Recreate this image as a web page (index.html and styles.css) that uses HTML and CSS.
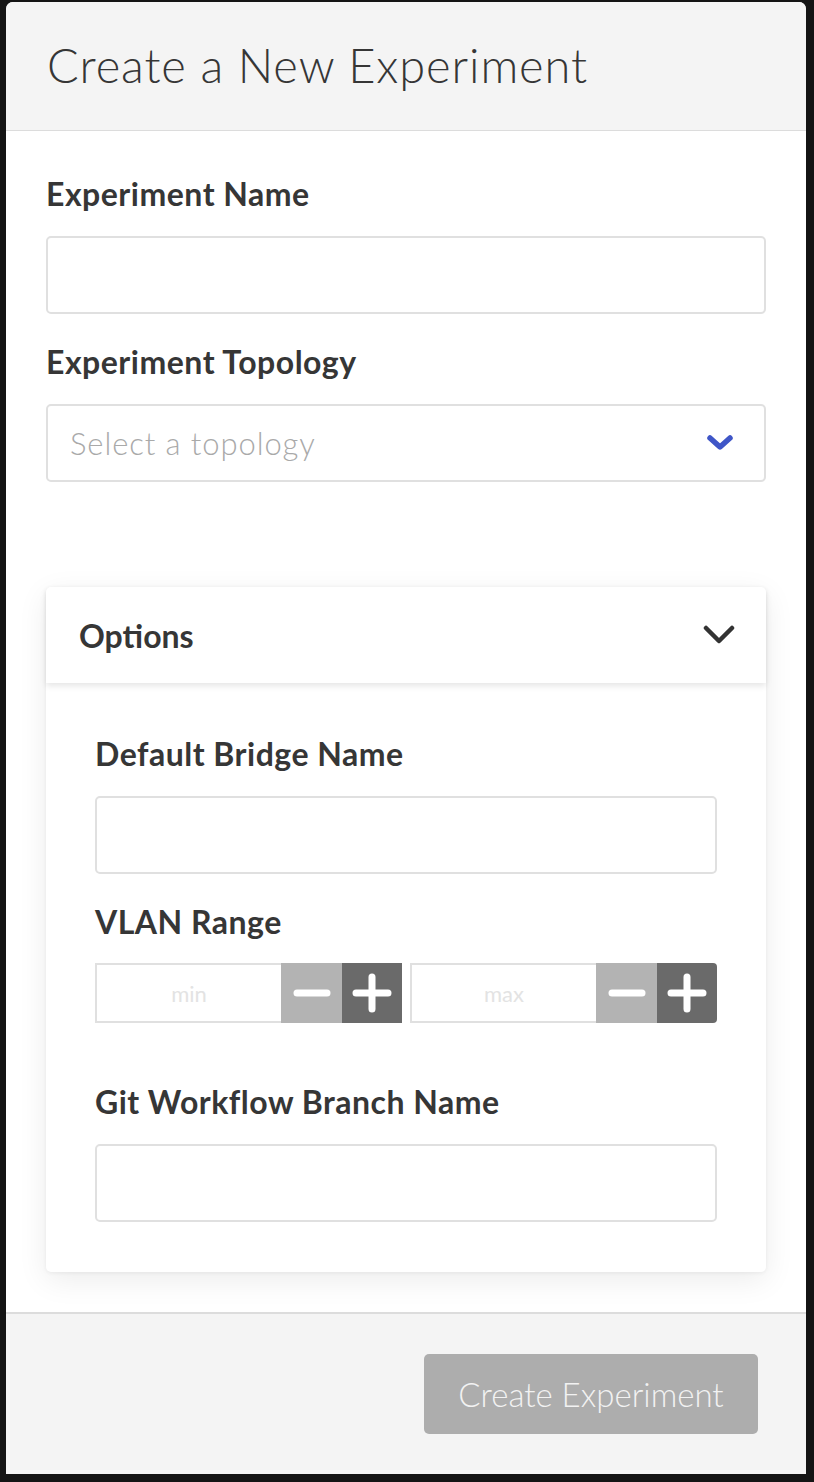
FILE: index.html
```html
<!DOCTYPE html>
<html lang="en">
<head>
<meta charset="utf-8">
<title>Create a New Experiment</title>
<link rel="stylesheet" href="styles.css">
</head>
<body>
<div class="modal">
  <div class="modal-header">
    <h1 class="modal-title">Create a New Experiment</h1>
  </div>
  <div class="modal-body">
    <div class="field">
      <label class="label">Experiment Name</label>
      <input class="input" type="text">
    </div>
    <div class="field">
      <label class="label">Experiment Topology</label>
      <div class="select">
        <span class="select-placeholder">Select a topology</span>
        <svg class="select-chevron" width="28" height="20" viewBox="0 0 28 20"><path d="M4 5 L14 14 L24 5" fill="none" stroke="#3f56c7" stroke-width="5.5" stroke-linecap="round" stroke-linejoin="round"/></svg>
      </div>
    </div>
    <div class="card">
      <div class="card-header">
        <span class="card-title">Options</span>
        <svg class="card-chevron" width="32" height="22" viewBox="0 0 32 22"><path d="M3 4 L16 17 L29 4" fill="none" stroke="#333" stroke-width="4.5" stroke-linecap="round" stroke-linejoin="round"/></svg>
      </div>
      <div class="card-content">
        <div class="field">
          <label class="label">Default Bridge Name</label>
          <input class="input" type="text">
        </div>
        <div class="field field-vlan">
          <label class="label">VLAN Range</label>
          <div class="range-row">
            <div class="num-group">
              <input class="num-input" type="text" placeholder="min">
              <button class="num-btn minus"><svg width="38" height="12" viewBox="0 0 38 12"><path d="M4 6 H34" stroke="#fff" stroke-width="7" stroke-linecap="round"/></svg></button>
              <button class="num-btn plus"><svg width="40" height="40" viewBox="0 0 40 40"><path d="M4 20 H36 M20 4 V36" stroke="#fff" stroke-width="7" stroke-linecap="round"/></svg></button>
            </div>
            <div class="num-group last">
              <input class="num-input" type="text" placeholder="max">
              <button class="num-btn minus"><svg width="38" height="12" viewBox="0 0 38 12"><path d="M4 6 H34" stroke="#fff" stroke-width="7" stroke-linecap="round"/></svg></button>
              <button class="num-btn plus"><svg width="40" height="40" viewBox="0 0 40 40"><path d="M4 20 H36 M20 4 V36" stroke="#fff" stroke-width="7" stroke-linecap="round"/></svg></button>
            </div>
          </div>
        </div>
        <div class="field field-git">
          <label class="label">Git Workflow Branch Name</label>
          <input class="input" type="text">
        </div>
      </div>
    </div>
  </div>
  <div class="modal-footer">
    <button class="btn-create" disabled>Create Experiment</button>
  </div>
</div>
</body>
</html>
```
FILE: styles.css
```css
* { box-sizing: border-box; }
html, body { margin: 0; padding: 0; }
body {
  background: #141414;
  font-family: Lato, "Open Sans", sans-serif;
  color: #333;
  height: 1482px;
  overflow: hidden;
}
.modal {
  width: 800px;
  margin: 2px 0 0 6px;
  background: #fff;
  border-radius: 7px 7px 0 0;
  overflow: hidden;
}
.modal-header {
  height: 129px;
  background: #f4f4f4;
  border-bottom: 1px solid #dcdcdc;
  display: flex;
  align-items: center;
  padding: 0 41px 0 41px;
}
.modal-title {
  margin: 0 0 2px 0;
  font-weight: 300;
  font-size: 47px;
  color: #363636;
  letter-spacing: 0.9px;
}
.modal-body {
  padding: 43px 40px 40px 40px;
}
.field {
  display: flex;
  flex-direction: column;
}
.field + .field { margin-top: 28px; }
.label {
  font-size: 32px;
  line-height: 40px;
  font-weight: 700;
  letter-spacing: 0.5px;
  color: #363636;
  margin-bottom: 22px;
}
.input {
  height: 78px;
  width: 100%;
  border: 2px solid #e0e0e0;
  border-radius: 5px;
  background: #fff;
  font-family: inherit;
  font-size: 28px;
  padding: 0 22px;
  outline: none;
}
.select {
  height: 78px;
  border: 2px solid #e0e0e0;
  border-radius: 5px;
  display: flex;
  align-items: center;
  justify-content: space-between;
  padding: 0 30px 0 22px;
}
.select-placeholder {
  font-size: 31px;
  font-weight: 300;
  letter-spacing: 0.9px;
  color: #a9a9a9;
}
.card {
  margin-top: 105px;
  border-radius: 5px;
  background: #fff;
  box-shadow: 0 8px 30px rgba(0,0,0,0.08), 0 1px 4px rgba(0,0,0,0.06);
}
.card-header {
  height: 96px;
  display: flex;
  align-items: center;
  justify-content: space-between;
  padding: 0 31px 0 33px;
  box-shadow: 0 3px 6px rgba(0,0,0,0.1);
  border-radius: 5px 5px 0 0;
}
.card-title {
  font-size: 32px;
  font-weight: 700;
  color: #363636;
}
.card-content {
  padding: 51px 49px 50px 49px;
}
.field.field-vlan .label { margin-bottom: 21px; }
.field.field-git { margin-top: 59px; }
.range-row {
  display: flex;
  gap: 8px;
}
.num-group {
  flex: 1 1 0;
  min-width: 0;
  display: flex;
  height: 60px;
}
.num-input {
  flex: 1 1 0;
  width: 0;
  min-width: 0;
  border: 2px solid #e0e0e0;
  border-right: none;
  font-family: inherit;
  font-size: 22px;
  text-align: center;
  color: #333;
  outline: none;
}
.num-input::placeholder { color: #e3e3e3; }
.num-btn {
  width: 61px;
  flex: none;
  border: none;
  padding: 0;
  display: flex;
  align-items: center;
  justify-content: center;
}
.num-btn.minus { background: #b3b3b3; }
.num-btn.plus { background: #6a6a6a; width: 60px; }
.num-group.last .num-btn.plus { border-radius: 0 4px 4px 0; }
.modal-footer {
  height: 162px;
  background: #f4f4f4;
  border-top: 2px solid #dcdcdc;
  display: flex;
  justify-content: flex-end;
  align-items: flex-start;
  padding: 40px 48px 0 0;
}
.btn-create {
  width: 334px;
  height: 80px;
  border: none;
  border-radius: 5px;
  background: #adadad;
  color: #f2f2f2;
  font-family: inherit;
  font-size: 33px;
  font-weight: 300;
}
```
